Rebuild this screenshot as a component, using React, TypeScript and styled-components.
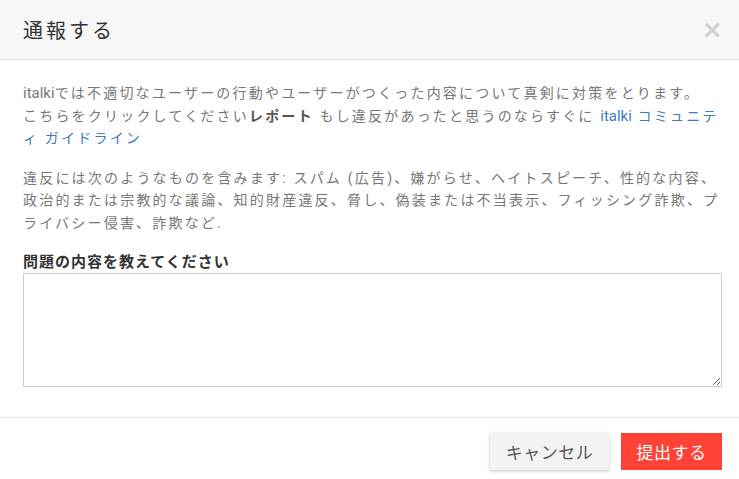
import React from "react";
import styled, { createGlobalStyle } from "styled-components";

const Global = createGlobalStyle`
  html, body { margin: 0; padding: 0; background: #fff; }
  body { font-family: Roboto, "Noto Sans CJK JP", sans-serif; }
  * { box-sizing: border-box; }
`;

const Modal = styled.div`
  width: 739px;
  height: 479px;
  display: flex;
  flex-direction: column;
  background: #fff;
`;

const Header = styled.div`
  height: 60px;
  background: #f7f7f7;
  border-bottom: 1px solid #e5e5e5;
  display: flex;
  align-items: center;
  justify-content: space-between;
  padding: 0 18px 0 23px;
`;

const Title = styled.h4`
  margin: 0;
  font-size: 20px;
  font-weight: 400;
  letter-spacing: 3px;
  color: #333;
  font-family: Roboto, "Noto Sans CJK JP", sans-serif;
`;

const Close = styled.button`
  border: 0;
  background: none;
  padding: 0;
  font-size: 30px;
  line-height: 1;
  font-weight: 700;
  color: #000;
  opacity: 0.15;
  font-family: "Liberation Sans", Arial, sans-serif;
  cursor: pointer;
`;

const Body = styled.div`
  padding: 22px 17px 29px 23px;
  flex: 1;
  border-bottom: 1px solid #e5e5e5;
`;

const Para = styled.p`
  margin: 0 0 17px;
  font-size: 14px;
  line-height: 22.5px;
  letter-spacing: 2.2px;
  line-break: loose;
  color: #777;
`;

const Latin = styled.span`
  letter-spacing: 0;
  font-size: 15px;
`;

const Strong = styled.b`
  color: #555;
  font-weight: 700;
`;

const Link = styled.a`
  color: #3b7bbd;
  text-decoration: none;
`;

const Label = styled.label`
  display: block;
  font-size: 15px;
  font-weight: 700;
  letter-spacing: 1px;
  line-height: 22px;
  color: #333;
  margin-top: 15px;
`;

const TextArea = styled.textarea`
  display: block;
  width: 699px;
  height: 114px;
  border: 1px solid #ccc;
  resize: vertical;
  margin: 0;
  font-family: inherit;
`;

const Footer = styled.div`
  display: flex;
  justify-content: flex-end;
  align-items: flex-start;
  gap: 12px;
  padding: 15px 17px 0 0;
  height: 61px;
`;

const Button = styled.button<{ $primary?: boolean }>`
  height: 37px;
  border: 0;
  padding: 0;
  width: ${(p) => (p.$primary ? "101px" : "119px")};
  background: ${(p) => (p.$primary ? "#ff4136" : "#f3f3f3")};
  color: ${(p) => (p.$primary ? "#fff" : "#555")};
  box-shadow: ${(p) => (p.$primary ? "none" : "0 1px 3px rgba(0,0,0,0.25)")};
  font-size: 17px;
  letter-spacing: 0.5px;
  font-family: Roboto, "Noto Sans CJK JP", sans-serif;
  cursor: pointer;
`;

export default function App() {
  return (
    <>
      <Global />
      <Modal>
        <Header>
          <Title>通報する</Title>
          <Close aria-label="close">×</Close>
        </Header>
        <Body>
          <Para>
            <Latin>italki</Latin>では不適切なユーザーの行動やユーザーがつくった内容について真剣に対策をとります。
            <br />
            こちらをクリックしてください<Strong>レポート</Strong> もし違反があったと思うのならすぐに <Link href="#"><Latin>italki</Latin> コミュニティ ガイドライン</Link>
          </Para>
          <Para>
            違反には次のようなものを含みます: スパム (広告)、嫌がらせ、ヘイトスピーチ、性的な内容、政治的または宗教的な議論、知的財産違反、脅し、偽装または不当表示、フィッシング詐欺、プライバシー侵害、詐欺など.
          </Para>
          <Label>問題の内容を教えてください</Label>
          <TextArea />
        </Body>
        <Footer>
          <Button>キャンセル</Button>
          <Button $primary>提出する</Button>
        </Footer>
      </Modal>
    </>
  );
}
